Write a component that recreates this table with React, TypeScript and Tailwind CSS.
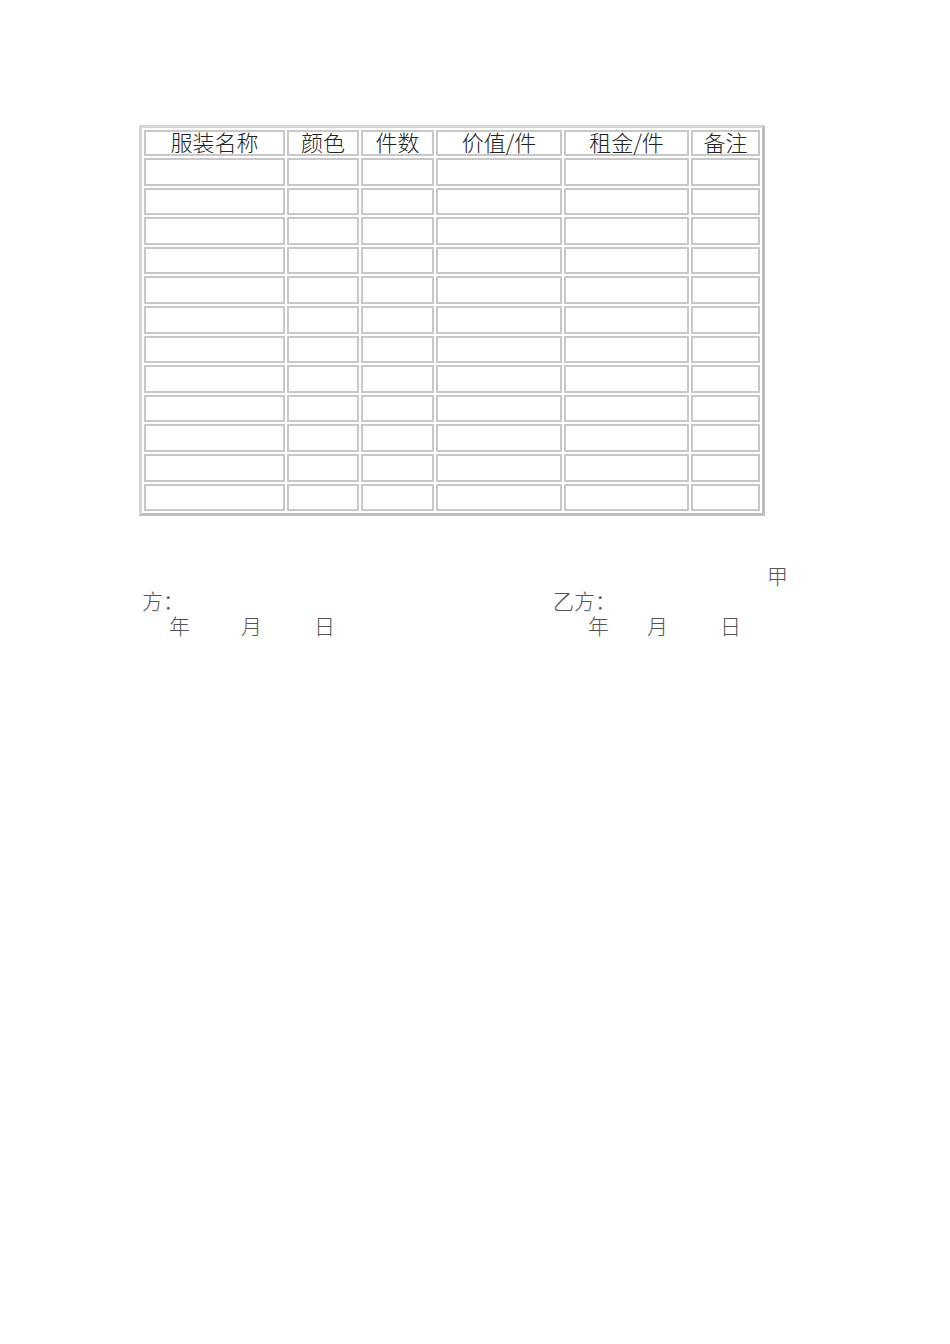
const headers = ['服装名称', '颜色', '件数', '价值/件', '租金/件', '备注']
const colWidths = ['w-[141px]', 'w-[72px]', 'w-[73px]', 'w-[126px]', 'w-[125px]', 'w-[69px]']
const rows = Array.from({ length: 12 }, (_, i) => i)

const font = { fontFamily: '"Noto Sans CJK SC", "Noto Sans", sans-serif' }

export default function App() {
  return (
    <div className="min-h-[1344px] w-[950px] bg-white font-light" style={font}>
      <div className="pl-[139px] pt-[125px]">
        <table className="w-[626px] table-fixed border-separate border-spacing-[2px] border-[3px] border-t-[#d6d6d6] border-l-[#d6d6d6] border-r-[#bdbdbd] border-b-[#bdbdbd]">
          <colgroup>
            {colWidths.map((w, i) => (
              <col key={i} className={w} />
            ))}
          </colgroup>
          <thead>
            <tr>
              {headers.map((h) => (
                <th
                  key={h}
                  className="h-[26px] border-2 border-[#c8c8c8] p-0 pb-[4px] text-center align-middle text-[22px] leading-[18px] font-light text-[#222]"
                >
                  {h}
                </th>
              ))}
            </tr>
          </thead>
          <tbody>
            {rows.map((r) => (
              <tr key={r}>
                {headers.map((h) => (
                  <td key={h} className="h-[27.6px] border-2 border-[#c8c8c8] p-0" />
                ))}
              </tr>
            ))}
          </tbody>
        </table>
      </div>

      {/* signature lines */}
      <div className="mt-[47px] text-[21px] leading-[25px] text-[#555]">
        <div className="pl-[767px]">甲</div>
        <div className="flex">
          <span className="w-[553px] shrink-0 pl-[142px]">方：</span>
          <span>乙方：</span>
        </div>
        <div className="flex">
          <span className="pl-[169px]">年</span>
          <span className="pl-[51px]">月</span>
          <span className="pl-[52px]">日</span>
          <span className="pl-[253px]">年</span>
          <span className="pl-[38px]">月</span>
          <span className="pl-[52px]">日</span>
        </div>
      </div>
    </div>
  )
}
